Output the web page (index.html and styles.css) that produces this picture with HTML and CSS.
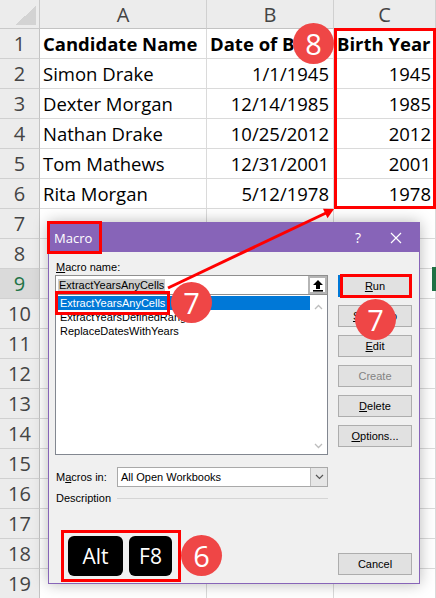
FILE: index.html
```html
<!DOCTYPE html>
<html>
<head>
<meta charset="utf-8">
<link rel="stylesheet" href="styles.css">
</head>
<body>
<div class="sheet">
  <div class="corner"><div class="tri"></div></div>
  <div class="ch">A</div><div class="ch">B</div><div class="ch">C</div>

  <div class="rh">1</div><div class="cell bold">Candidate Name</div><div class="cell bold">Date of Birth</div><div class="cell bold">Birth Year</div>
  <div class="rh">2</div><div class="cell">Simon Drake</div><div class="cell num">1/1/1945</div><div class="cell num">1945</div>
  <div class="rh">3</div><div class="cell">Dexter Morgan</div><div class="cell num">12/14/1985</div><div class="cell num">1985</div>
  <div class="rh">4</div><div class="cell">Nathan Drake</div><div class="cell num">10/25/2012</div><div class="cell num">2012</div>
  <div class="rh">5</div><div class="cell">Tom Mathews</div><div class="cell num">12/31/2001</div><div class="cell num">2001</div>
  <div class="rh">6</div><div class="cell">Rita Morgan</div><div class="cell num">5/12/1978</div><div class="cell num">1978</div>
  <div class="rh">7</div><div class="cell"></div><div class="cell"></div><div class="cell"></div>
  <div class="rh">8</div><div class="cell"></div><div class="cell"></div><div class="cell"></div>
  <div class="rh rh-sel">9</div><div class="cell"></div><div class="cell"></div><div class="cell"></div>
  <div class="rh">10</div><div class="cell"></div><div class="cell"></div><div class="cell"></div>
  <div class="rh">11</div><div class="cell"></div><div class="cell"></div><div class="cell"></div>
  <div class="rh">12</div><div class="cell"></div><div class="cell"></div><div class="cell"></div>
  <div class="rh">13</div><div class="cell"></div><div class="cell"></div><div class="cell"></div>
  <div class="rh">14</div><div class="cell"></div><div class="cell"></div><div class="cell"></div>
  <div class="rh">15</div><div class="cell"></div><div class="cell"></div><div class="cell"></div>
  <div class="rh">16</div><div class="cell"></div><div class="cell"></div><div class="cell"></div>
  <div class="rh">17</div><div class="cell"></div><div class="cell"></div><div class="cell"></div>
  <div class="rh">18</div><div class="cell"></div><div class="cell"></div><div class="cell"></div>
  <div class="rh">19</div><div class="cell"></div><div class="cell"></div><div class="cell"></div>
</div>

<div class="active-cell"></div>

<div class="dialog">
  <div class="titlebar">
    <span class="title">Macro</span>
    <span class="help">?</span>
    <span class="close"><svg width="12" height="12" viewBox="0 0 12 12"><path d="M1 1L11 11M11 1L1 11" stroke="#fff" stroke-width="1.2"/></svg></span>
  </div>
  <div class="dbody">
    <div class="left">
      <div class="lbl"><u>M</u>acro name:</div>
      <div class="namebox">
        <span class="seltext">ExtractYearsAnyCells</span>
        <span class="upbtn"><svg width="12" height="13" viewBox="0 0 12 13"><path d="M6 1L1 6H4V10H8V6H11Z" fill="#000"/><rect x="1" y="11" width="10" height="1.6" fill="#000"/></svg></span>
      </div>
      <div class="list">
        <div class="items">
          <div class="item sel">ExtractYearsAnyCells</div>
          <div class="item">ExtractYearsDefinedRange</div>
          <div class="item">ReplaceDatesWithYears</div>
        </div>
        <div class="scroll">
          <svg width="9" height="6" viewBox="0 0 9 6"><path d="M1 5L4.5 1.5L8 5" fill="none" stroke="#bdbdbd" stroke-width="1.3"/></svg>
          <svg width="9" height="6" viewBox="0 0 9 6"><path d="M1 1L4.5 4.5L8 1" fill="none" stroke="#bdbdbd" stroke-width="1.3"/></svg>
        </div>
      </div>
      <div class="macrosin">
        <span class="lbl">M<u>a</u>cros in:</span>
        <div class="select">
          <span class="selval">All Open Workbooks</span>
          <span class="dd"><svg width="9" height="6" viewBox="0 0 9 6"><path d="M1 1L4.5 4.5L8 1" fill="none" stroke="#555" stroke-width="1.2"/></svg></span>
        </div>
      </div>
      <div class="desc"><span>Description</span><span class="rule"></span></div>
    </div>
    <div class="right">
      <div class="btn run"><u>R</u>un</div>
      <div class="btn"><u>S</u>tep Into</div>
      <div class="btn"><u>E</u>dit</div>
      <div class="btn disabled">Create</div>
      <div class="btn"><u>D</u>elete</div>
      <div class="btn"><u>O</u>ptions...</div>
      <div class="btn cancel">Cancel</div>
    </div>
  </div>
</div>

<div class="keys">
  <div class="key key-alt">Alt</div>
  <div class="key key-f8">F8</div>
</div>

<div class="box box-col"></div>
<div class="box box-title"></div>
<div class="box box-item"></div>
<div class="box box-run"></div>

<svg class="arrow" width="436" height="598" viewBox="0 0 436 598">
  <line x1="168" y1="288" x2="326" y2="213" stroke="#f00" stroke-width="3"/>
  <polygon points="334,209 327.5,218.3 323,208.8" fill="#f00"/>
</svg>

<div class="badge badge-8">8</div>
<div class="badge badge-7a">7</div>
<div class="badge badge-7b">7</div>
<div class="badge badge-6">6</div>
</body>
</html>
```

FILE: styles.css
```css
* { box-sizing: border-box; }
html, body { margin: 0; padding: 0; }
body {
  width: 436px;
  height: 598px;
  overflow: hidden;
  position: relative;
  background: #fff;
  font-family: "Open Sans", "Liberation Sans", sans-serif;
}

/* spreadsheet */
.sheet {
  display: grid;
  grid-template-columns: 40px 167px 127px 102px;
  grid-template-rows: 29px repeat(19, 30px);
}
.corner {
  background: #ececec;
  border-right: 1px solid #c9c9c9;
  border-bottom: 1px solid #c9c9c9;
  display: flex;
  justify-content: flex-end;
  align-items: flex-end;
  padding: 0 3px 3px 0;
}
.tri {
  width: 21px;
  height: 19px;
  background: linear-gradient(to bottom right, transparent 50%, #d3d3d3 50%);
}
.ch, .rh {
  background: #ececec;
  color: #444;
  font-size: 20px;
  display: flex;
  align-items: center;
  justify-content: center;
  border-right: 1px solid #d0d0d0;
  border-bottom: 1px solid #d0d0d0;
}
.ch { border-bottom-color: #c3c3c3; }
.rh { border-right-color: #c3c3c3; }
.rh-sel { background: #dadada; color: #217346; }
.cell {
  border-right: 1px solid #dadada;
  border-bottom: 1px solid #dadada;
  font-size: 18.5px;
  display: flex;
  align-items: center;
  padding: 0 4px 0 3px;
  white-space: nowrap;
  overflow: hidden;
  color: #000;
}
.num { justify-content: flex-end; }
.bold { font-weight: 700; }

.active-cell {
  position: absolute;
  left: 432px;
  top: 267px;
  width: 4px;
  height: 24px;
  background: #217346;
}

/* dialog */
.dialog {
  position: absolute;
  left: 48px;
  top: 222px;
  width: 372px;
  height: 362px;
  border: 1px solid #8764b8;
  background: #f0f0f0;
  box-shadow: 0 0 14px rgba(0,0,0,0.28);
  display: flex;
  flex-direction: column;
  font-family: "Liberation Sans", sans-serif;
  font-size: 11px;
  color: #000;
}
.titlebar {
  height: 29px;
  background: #8764b8;
  display: flex;
  align-items: center;
  color: #fff;
  flex-shrink: 0;
}
.title {
  font-family: "Open Sans", sans-serif;
  font-size: 13px;
  padding-left: 5px;
  margin-right: auto;
}
.help {
  width: 30px;
  text-align: center;
  font-family: "Open Sans", sans-serif;
  font-size: 14px;
}
.close {
  width: 46px;
  display: flex;
  justify-content: center;
  align-items: center;
}
.dbody {
  flex: 1;
  display: flex;
  gap: 10px;
  padding: 7px 7px 8px 6px;
}
.left {
  width: 273px;
  display: flex;
  flex-direction: column;
}
.lbl {
  height: 16px;
  line-height: 16px;
  padding-left: 1px;
}
.namebox {
  height: 20px;
  border: 1px solid #8f8f8f;
  background: #fff;
  display: flex;
  align-items: center;
  padding-left: 2px;
}
.seltext {
  background: #cccccc;
  line-height: 12px;
  padding: 0 1px;
}
.upbtn {
  margin-left: auto;
  width: 19px;
  height: 18px;
  border: 2px solid #b5b5b5;
  background: #fff;
  display: flex;
  align-items: center;
  justify-content: center;
}
.list {
  height: 160px;
  border: 1px solid #828790;
  border-top: none;
  background: #fff;
  display: flex;
  padding: 1px 0 0 1px;
}
.items {
  flex: 1;
}
.item {
  height: 14px;
  line-height: 14px;
  padding-left: 3px;
  white-space: nowrap;
}
.item.sel {
  background: #0078d7;
  color: #fff;
}
.scroll {
  width: 17px;
  display: flex;
  flex-direction: column;
  justify-content: space-between;
  align-items: center;
  padding: 8px 0 5px;
}
.macrosin {
  margin-top: 12px;
  display: flex;
  align-items: center;
  justify-content: space-between;
}
.select {
  width: 211px;
  height: 20px;
  border: 1px solid #a9a9a9;
  background: #fff;
  display: flex;
  align-items: center;
}
.selval { padding-left: 3px; }
.dd {
  margin-left: auto;
  width: 17px;
  height: 18px;
  background: #e6e6e6;
  border-left: 1px solid #bdbdbd;
  display: flex;
  align-items: center;
  justify-content: center;
}
.desc {
  margin-top: 4px;
  height: 14px;
  display: flex;
  align-items: center;
  gap: 6px;
  padding-left: 1px;
}
.rule {
  flex: 1;
  height: 1px;
  background: #d5d5d5;
}
.right {
  width: 74px;
  display: flex;
  flex-direction: column;
  gap: 8px;
  padding-top: 16px;
}
.btn {
  height: 22px;
  border: 1px solid #adadad;
  background: #e1e1e1;
  display: flex;
  align-items: center;
  justify-content: center;
}
.btn.run { border: 2px solid #0078d7; }
.btn.disabled { color: #838383; }
.btn.cancel { margin-top: auto; }

/* keys */
.keys {
  position: absolute;
  left: 61px;
  top: 530px;
  width: 120px;
  height: 52px;
  border: 3px solid #f00;
  display: flex;
  gap: 6px;
  padding: 3px 6px 3px 4px;
}
.key {
  height: 40px;
  background: #000;
  border-radius: 6px;
  color: #fff;
  font-family: "Open Sans", sans-serif;
  font-size: 21px;
  display: flex;
  align-items: center;
  justify-content: center;
}
.key-alt { width: 55px; }
.key-f8 { width: 43px; }

/* annotations */
.box {
  position: absolute;
  border: 3px solid #f00;
}
.box-col { left: 334px; top: 28px; width: 102px; height: 181px; }
.box-title { left: 47px; top: 221px; width: 55px; height: 33px; }
.box-item { left: 55px; top: 291px; width: 115px; height: 24px; }
.box-run { left: 340px; top: 274px; width: 72px; height: 24px; }

.arrow {
  position: absolute;
  left: 0;
  top: 0;
}

.badge {
  position: absolute;
  width: 41px;
  height: 41px;
  border-radius: 50%;
  background: #ef4646;
  color: #fff;
  font-family: "Open Sans", sans-serif;
  font-size: 29px;
  line-height: 41px;
  text-align: center;
}
.badge-8 { left: 293px; top: 23px; }
.badge-7a { left: 171px; top: 282px; }
.badge-7b { left: 355px; top: 299px; }
.badge-6 { left: 181px; top: 535px; }
```
